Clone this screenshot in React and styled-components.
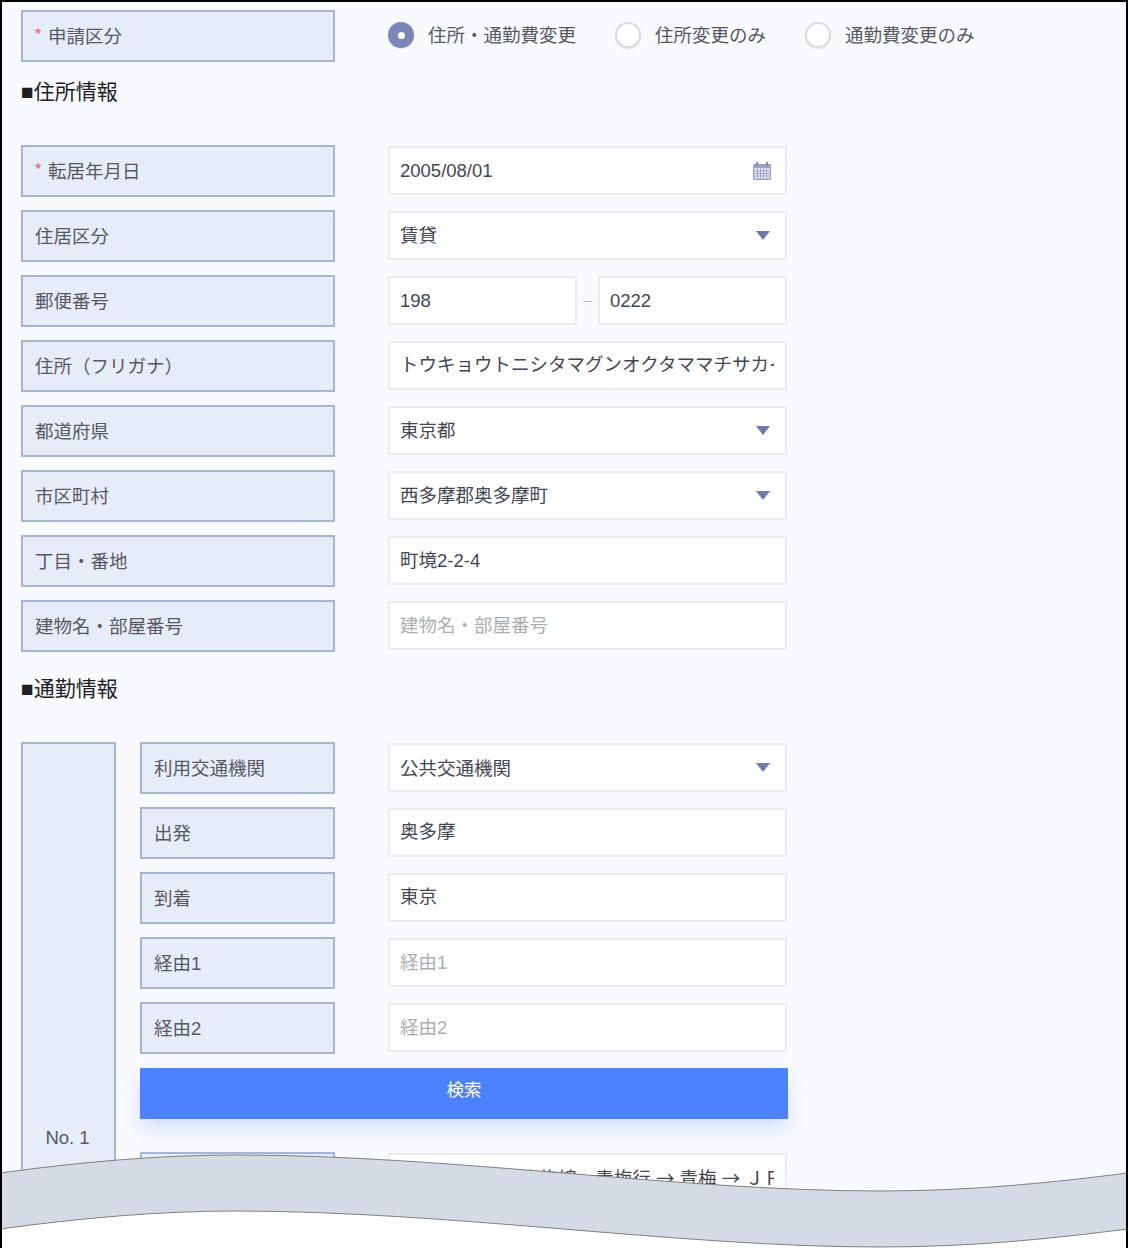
import React from "react";
import styled, { createGlobalStyle } from "styled-components";

const Global = createGlobalStyle`
  html, body { margin: 0; padding: 0; background: #fff; }
  * { box-sizing: border-box; }
`;

const FONT = `"Liberation Sans", "Noto Sans CJK JP", sans-serif`;

const Frame = styled.div`
  position: relative;
  width: 1128px;
  height: 1248px;
  overflow: hidden;
  padding: 8px 0 0 19px;
  background: #f9fafd;
  border-top: 2px solid #000;
  border-left: 2px solid #000;
  border-right: 2px solid #000;
  font-family: ${FONT};
  color: #4a4c58;
`;

const Stack = styled.div`
  display: flex;
  flex-direction: column;
  gap: 13px;
`;

const Row = styled.div`
  display: flex;
  align-items: flex-start;
  gap: 53px;
`;

const Label = styled.div`
  flex: none;
  display: flex;
  align-items: center;
  width: ${(p) => p.$width || 314}px;
  height: 52px;
  padding: 0 12px 2px;
  background: #e7edf8;
  border: 2px solid #a6b5d3;
  font-size: 18.5px;
  color: #565864;
  white-space: nowrap;
`;

const Star = styled.span`
  width: 13px;
  color: #ff4f66;
  font-size: 16px;
  line-height: 1;
`;

const Heading = styled.h2`
  margin: ${(p) => p.$top}px 0 38px;
  height: 30px;
  line-height: 30px;
  font-size: 21px;
  font-weight: 400;
  color: #1f2026;
`;

const Control = styled.div`
  display: flex;
  align-items: center;
  flex: none;
  width: ${(p) => p.$width || 399}px;
  height: 49px;
  margin-top: 1px;
  padding: 0 11px 0 10px;
  background: #fff;
  border: 2px solid #ececee;
`;

const Field = styled.input`
  flex: 1;
  min-width: 0;
  padding: 0 0 ${(p) => p.$lift * 2}px;
  border: 0;
  outline: 0;
  background: transparent;
  font-family: ${(p) => (p.$cjkFirst ? `"Noto Sans CJK JP", "Liberation Sans", sans-serif` : FONT)};
  word-spacing: ${(p) => (p.$cjkFirst ? "1px" : "0")};
  font-size: 18.5px;
  color: #444654;
  &::placeholder { color: #adaeb4; opacity: 1; }
`;

const Arrow = styled.svg`
  flex: none;
  width: 14px;
  height: 9px;
  margin-right: 4px;
`;

const CalendarIcon = styled.svg`
  flex: none;
  width: 20px;
  height: 20px;
  margin-right: 2px;
`;

const PostalPair = styled.div`
  display: flex;
  align-items: flex-start;
`;

const Dash = styled.span`
  width: 21px;
  height: 51px;
  line-height: 49px;
  text-align: center;
  font-size: 15px;
  color: #b6b7bc;
`;

const RadioGroup = styled.div`
  display: flex;
  align-items: center;
  height: 50px;
  gap: 39px;
`;

const RadioItem = styled.label`
  display: flex;
  align-items: center;
  gap: 14px;
  font-size: 18.5px;
  color: #565864;
  white-space: nowrap;
`;

const RadioText = styled.span`
  padding-bottom: 2px;
`;

const RadioDot = styled.span`
  display: flex;
  align-items: center;
  justify-content: center;
  width: 26px;
  height: 26px;
  border-radius: 50%;
  background: ${(p) => (p.$on ? "#7a86b5" : "#fff")};
  border: ${(p) => (p.$on ? "0" : "2px solid #dcdcdf")};
  box-shadow: 0 1px 2px rgba(120, 125, 150, 0.18);
  &::after {
    content: "";
    display: ${(p) => (p.$on ? "block" : "none")};
    width: 7px;
    height: 7px;
    border-radius: 50%;
    background: #fff;
  }
`;

const Commute = styled.div`
  display: flex;
  gap: 24px;
  align-items: flex-start;
`;

const NoCell = styled.div`
  flex: none;
  display: flex;
  align-items: center;
  justify-content: center;
  width: 95px;
  min-height: 792px;
  padding-right: 2px;
  background: #e7edf8;
  border: 2px solid #a6b5d3;
  font-size: 18.5px;
  color: #565864;
`;

const SearchButton = styled.button`
  display: block;
  width: 648px;
  height: 51px;
  margin: 1px 0 20px;
  padding: 0 0 10px;
  border: 0;
  background: #4c82ff;
  color: #fff;
  font-family: ${FONT};
  font-size: 17.5px;
  box-shadow: 0 10px 20px rgba(76, 130, 255, 0.22);
`;

const Wave = styled.svg`
  position: absolute;
  left: -2px;
  top: -2px;
  width: 1128px;
  height: 1248px;
`;

const Triangle = () => (
  <Arrow viewBox="0 0 14 9">
    <path d="M0 0H14L7 9Z" fill="#6f7aa8" />
  </Arrow>
);

const Calendar = () => (
  <CalendarIcon viewBox="0 0 20 20">
    <rect x="1" y="3" width="18" height="16" rx="1" fill="#9aa2c6" />
    <rect x="4" y="1" width="2" height="4" fill="#7f88b2" />
    <rect x="14" y="1" width="2" height="4" fill="#7f88b2" />
    <rect x="2.5" y="7" width="15" height="10.5" fill="#eef0f7" />
    <path d="M2.5 10H17.5M2.5 12.5H17.5M2.5 15H17.5M5.5 7V17.5M8.5 7V17.5M11.5 7V17.5M14.5 7V17.5" stroke="#9aa2c6" strokeWidth="1" />
  </CalendarIcon>
);

const TextInput = ({ value = "", placeholder, width, lift = 0, cjkFirst, children }) => (
  <Control $width={width}>
    <Field readOnly value={value} placeholder={placeholder} $lift={lift} $cjkFirst={cjkFirst} />
    {children}
  </Control>
);

const FormRow = ({ label, required, width, children }) => (
  <Row>
    <Label $width={width}>
      {required && <Star>*</Star>}
      {label}
    </Label>
    {children}
  </Row>
);

export default function App() {
  return (
    <Frame>
      <Global />
      <FormRow label="申請区分" required>
        <RadioGroup>
          <RadioItem><RadioDot $on /><RadioText>住所・通勤費変更</RadioText></RadioItem>
          <RadioItem><RadioDot /><RadioText>住所変更のみ</RadioText></RadioItem>
          <RadioItem><RadioDot /><RadioText>通勤費変更のみ</RadioText></RadioItem>
        </RadioGroup>
      </FormRow>

      <Heading $top={15}>■住所情報</Heading>
      <Stack>
        <FormRow label="転居年月日" required>
          <TextInput value="2005/08/01"><Calendar /></TextInput>
        </FormRow>
        <FormRow label="住居区分">
          <TextInput value="賃貸" lift={2}><Triangle /></TextInput>
        </FormRow>
        <FormRow label="郵便番号">
          <PostalPair>
            <TextInput value="198" width={189} />
            <Dash>–</Dash>
            <TextInput value="0222" width={189} />
          </PostalPair>
        </FormRow>
        <FormRow label="住所（フリガナ）">
          <TextInput value="トウキョウトニシタマグンオクタママチサカイ" lift={3} />
        </FormRow>
        <FormRow label="都道府県">
          <TextInput value="東京都" lift={2}><Triangle /></TextInput>
        </FormRow>
        <FormRow label="市区町村">
          <TextInput value="西多摩郡奥多摩町" lift={2}><Triangle /></TextInput>
        </FormRow>
        <FormRow label="丁目・番地">
          <TextInput value="町境2-2-4" lift={2} />
        </FormRow>
        <FormRow label="建物名・部屋番号">
          <TextInput placeholder="建物名・部屋番号" />
        </FormRow>
      </Stack>

      <Heading $top={22}>■通勤情報</Heading>
      <Commute>
        <NoCell>No. 1</NoCell>
        <Stack>
          <FormRow label="利用交通機関" width={195}>
            <TextInput value="公共交通機関" lift={1}><Triangle /></TextInput>
          </FormRow>
          <FormRow label="出発" width={195}>
            <TextInput value="奥多摩" lift={3} />
          </FormRow>
          <FormRow label="到着" width={195}>
            <TextInput value="東京" lift={3} />
          </FormRow>
          <FormRow label="経由1" width={195}>
            <TextInput placeholder="経由1" />
          </FormRow>
          <FormRow label="経由2" width={195}>
            <TextInput placeholder="経由2" />
          </FormRow>
          <SearchButton>検索</SearchButton>
          <FormRow label="経路" width={195}>
            <TextInput value="奥多摩 → ＪＲ青梅線　青梅行 → 青梅 → ＪＲ青梅線" lift={1} cjkFirst />
          </FormRow>
        </Stack>
      </Commute>

      <Wave viewBox="0 0 1128 1248">
        <path
          d="M0 1229 C80 1218 160 1211 235 1211 C450 1211 680 1247 880 1247 C970 1247 1050 1239 1128 1229 V1248 H0 Z"
          fill="#fff"
        />
        <path
          d="M0 1173 C80 1162 160 1155 235 1155 C450 1155 680 1191 880 1191 C970 1191 1050 1183 1127.5 1173 V1229 C1050 1239 970 1247 880 1247 C680 1247 450 1211 235 1211 C160 1211 80 1218 0.5 1229 Z"
          fill="#d5dbe5"
          stroke="#808080"
          strokeWidth="1"
        />
      </Wave>
    </Frame>
  );
}
